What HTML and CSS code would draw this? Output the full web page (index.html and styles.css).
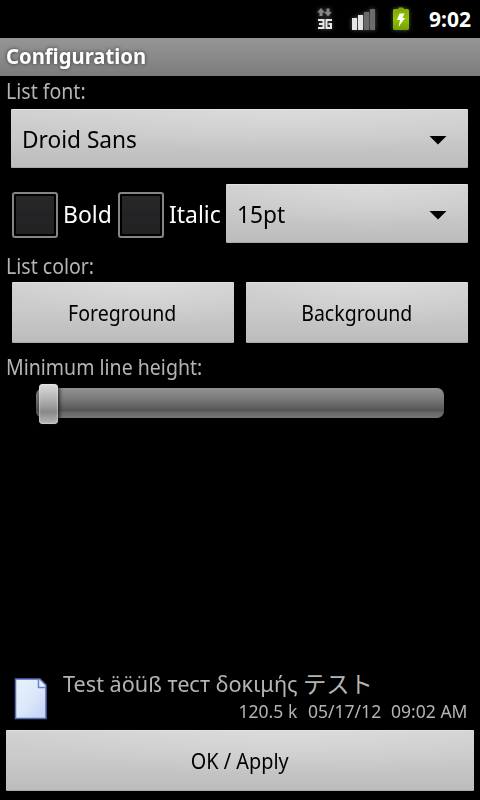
FILE: index.html
```html
<!DOCTYPE html>
<html lang="en">
<head>
<meta charset="utf-8">
<title>Configuration</title>
<link rel="stylesheet" href="styles.css">
</head>
<body>
<div class="screen">
  <header class="status">
    <svg class="net" width="24" height="30" viewBox="0 0 24 30">
      <path fill="#858585" d="M8 4l3.800 4.500H9.500V12h-3V8.500H4.200zM13.500 4.500h3V8h2.300L15 12.500 11.200 8h2.300z"/>
      <path fill="none" stroke="#e8e8e8" stroke-width="2" d="M5 16h5.500v8H5M6 20h4.500M19 16h-5.500v8h4.500v-4h-2.500"/>
    </svg>
    <svg class="signal" width="24" height="22" viewBox="0 0 24 22">
      <path fill="#e4e4e4" d="M0 10h5v12H0zM6 7h5v15H6z"/>
      <path fill="#6b6b6b" d="M12 4h5v18h-5zM18 1h5v21h-5z"/>
    </svg>
    <svg class="battery" width="18" height="24" viewBox="0 0 18 24">
      <defs><linearGradient id="bat" x2="0" y2="1"><stop stop-color="#78a500"/><stop offset=".5" stop-color="#8fc400"/><stop offset="1" stop-color="#75a000"/></linearGradient></defs>
      <path fill="url(#bat)" d="M2 2h4l1-1.500h4L12 2h4l1 1v19l-1 1H2l-1-1V3z"/>
      <path fill="#fff" d="M7.500 6.500h5L10.500 11H13l-6.500 9 1.500-7H5z"/>
    </svg>
    <span class="clock">9:02</span>
  </header>
  <h1 class="title"><span>Configuration</span></h1>
  <main class="form">
    <div class="label l1"><span>List font:</span></div>
    <div class="select font"><span>Droid Sans</span><i class="arrow"></i></div>
    <div class="styles">
      <i class="box"></i><span class="check bold"><span>Bold</span></span>
      <i class="box"></i><span class="check italic"><span>Italic</span></span>
      <div class="select size"><span>15pt</span><i class="arrow"></i></div>
    </div>
    <div class="label l2"><span>List color:</span></div>
    <div class="colors">
      <button><span>Foreground</span></button>
      <button><span>Background</span></button>
    </div>
    <div class="label l3"><span>Minimum line height:</span></div>
    <div class="slider"><i class="thumb"></i></div>
  </main>
  <section class="file">
    <svg class="doc" width="34" height="42" viewBox="0 0 34 42">
      <defs><linearGradient id="page" x2="1" y2="1"><stop stop-color="#e9f1fb"/><stop offset=".5" stop-color="#dce8fa"/><stop offset="1" stop-color="#c5cff6"/></linearGradient></defs>
      <path fill="url(#page)" stroke="#536bb4" stroke-width="1.500" d="M1.500 1H26l6 6V40.500H1.500z"/>
      <path fill="#e8effd" stroke="#6d82c8" stroke-width="1.500" d="M24.500 1v8.500h7.500"/>
    </svg>
    <div class="info">
      <div class="name"><span class="latin">Test äöüß тест δοκιμής </span><span class="jp">テスト</span></div>
      <div class="meta"><span>120.5 k</span><span>05/17/12</span><span>09:02 AM</span></div>
    </div>
  </section>
  <button class="apply"><span>OK / Apply</span></button>
</div>
</body>
</html>
```
FILE: styles.css
```css
* { box-sizing: border-box; }
body { margin: 0; background: #000; }
.screen {
  width: 480px; height: 800px; overflow: hidden;
  display: flex; flex-direction: column;
  background: #000; color: #b4b4b4;
  font: 21px/28px "Noto Sans", "Noto Sans CJK JP", sans-serif;
}
span { white-space: pre; }
.status { height: 38px; display: flex; flex: none; align-items: flex-start; }
.net { margin: 4px 0 0 313px; }
.signal { margin: 8px 0 0 15px; }
.battery { margin: 7px 0 0 16px; }
.net, .signal, .battery { filter: drop-shadow(0 0 2px #555); overflow: visible; flex: none; }
.clock { margin: 5px 0 0 19px; color: #fff; font-weight: 700; }
.title {
  height: 38px; margin: 0; padding: 4px 6px; flex: none;
  background: linear-gradient(#959595, #888 55%, #7b7b7b);
  color: #fff; font-size: 21px; line-height: 28px; font-weight: 700;
  text-shadow: 0 0 4px #333;
}
.form { flex: 1; }
.label { height: 33px; padding: 1px 6px 0; }
.label span, .title span, .select span, .check > span, .name > span { display: inline-block; transform-origin: 0 0; }
.title span { transform: scaleX(.965); }
.label span { transform: scaleX(.93); }
.select span { transform: scaleX(.945); }
.check > span { transform: scaleX(.955); }
button span { display: inline-block; transform: scaleX(.93); }
.select, button {
  border: 0; border-radius: 1px; color: #000;
  background:
    radial-gradient(ellipse 60% 75% at 60% 0, rgba(255, 255, 255, .22), transparent),
    linear-gradient(#d2d2d2, #cacaca 45%, #bcbcbc);
  box-shadow: inset 0 1px #e2e2e2, inset 0 -1px #aaa;
}
.select { height: 59px; display: flex; align-items: center; justify-content: space-between; padding: 1px 21px 0 11px; font-size: 24px; }
.font { margin: 0 12px 0 11px; }
.arrow { width: 18px; height: 9px; background: #000; clip-path: polygon(0 0, 100% 0, 50% 100%); margin-top: 2px; }
.styles { display: flex; align-items: center; margin: 16px 12px 0; height: 59px; }
.box { width: 46px; height: 46px; flex: none; margin-top: 3px; border: 2px solid #858585; border-radius: 3px; background: linear-gradient(#282828, #242226 50%, #222) content-box; padding: 2px; }
.check { color: #fff; font-size: 24px; padding: 1px 0 0 5px; flex: none; }
.bold { width: 60px; }
.italic { width: 62px; }
.size { flex: 1; }
.l2 { height: 39px; padding-top: 9px; }
.colors { display: grid; grid-template-columns: 1fr 1fr; gap: 12px; padding: 0 12px; }
button { height: 61px; font: inherit; padding: 0 1px 0 0; }
.l3 { height: 45px; padding-top: 10px; }
.slider { position: relative; height: 30px; margin: 0 36px; border-radius: 7px; background: linear-gradient(#929292, #777 40%, #555 75%, #646464 80%, #777); }
.thumb { position: absolute; left: 3px; top: -4px; width: 19px; height: 40px; border-radius: 4px; background: linear-gradient(#ddd, #aaa 45%, #898989 70%, #b8b8b8); box-shadow: inset 0 0 2px #fff, 1px 0 4px #111; }
.file { height: 60px; display: flex; padding: 0 12px 0 14px; flex: none; }
.doc { margin-top: 8px; flex: none; }
.info { flex: 1; padding-left: 15px; }
.name { display: flex; height: 28px; font-size: 22.5px; }
.name .latin { width: 240px; transform: scaleX(.963); }
.name .jp { font-size: 23.3px; line-height: 27px; font-family: "Noto Sans CJK JP", sans-serif; }
.meta { display: flex; justify-content: flex-end; gap: 8.5px; font-size: 18px; line-height: 26px; }
.meta span { display: inline-block; transform: scaleX(.975); transform-origin: 100% 0; }
.apply { margin: 0 6px 9px; flex: none; }
.apply span { transform: scaleX(.945); }
```
